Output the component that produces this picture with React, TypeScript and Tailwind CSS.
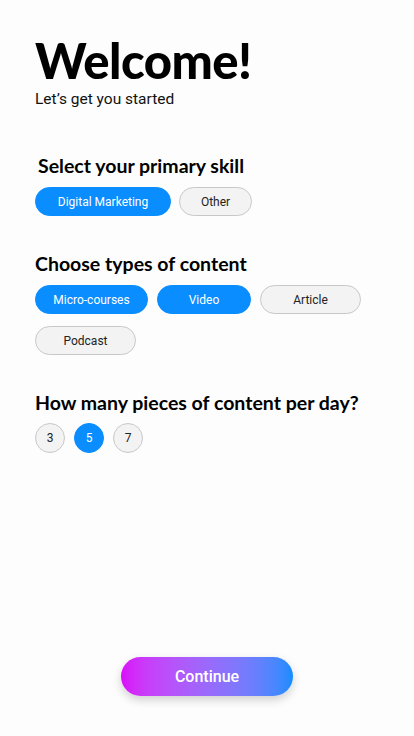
import { useState } from "react"

const heading = { fontFamily: "Lato, 'Noto Sans', sans-serif" }

function Pill({ label, active, onClick, w }: { label: string; active: boolean; onClick: () => void; w: string }) {
  return (
    <button
      type="button"
      onClick={onClick}
      className={`${w} h-[29px] rounded-full text-[12px] border ${
        active ? "bg-[#0a8dff] border-[#0a8dff] text-white" : "bg-[#f3f3f3] border-[#c8c8c8] text-[#222]"
      }`}
    >
      {label}
    </button>
  )
}

export default function App() {
  const [skill, setSkill] = useState("Digital Marketing")
  const [types, setTypes] = useState<string[]>(["Micro-courses", "Video"])
  const [count, setCount] = useState(5)

  const toggle = (t: string) =>
    setTypes((prev) => (prev.includes(t) ? prev.filter((x) => x !== t) : [...prev, t]))

  return (
    <div
      className="min-h-[736px] w-[414px] bg-[#fdfdfd] flex flex-col px-[35px] pt-[34px] pb-[40px] text-black"
      style={{ fontFamily: "Roboto, 'Liberation Sans', sans-serif" }}
    >
      <h1 className="text-[49px] leading-[52px] font-black tracking-[-0.5px]" style={heading}>
        Welcome!
      </h1>
      <p className="mt-[3px] text-[15.5px] leading-[20px] text-[#111]">Let’s get you started</p>

      <h2 className="mt-[45px] ml-[3px] text-[19.5px] leading-[24px] font-bold" style={heading}>
        Select your primary skill
      </h2>
      <div className="mt-[9px] flex gap-[8px]">
        {[
          ["Digital Marketing", "w-[136px]"],
          ["Other", "w-[73px]"],
        ].map(([s, w]) => (
          <Pill key={s} label={s} w={w} active={skill === s} onClick={() => setSkill(s)} />
        ))}
      </div>

      <h2 className="mt-[36px] text-[19.5px] leading-[24px] font-bold" style={heading}>
        Choose types of content
      </h2>
      <div className="mt-[9px] flex flex-wrap gap-x-[9px] gap-y-[12px] w-[340px]">
        {[
          ["Micro-courses", "w-[113px]"],
          ["Video", "w-[94px]"],
          ["Article", "w-[101px]"],
          ["Podcast", "w-[101px]"],
        ].map(([t, w]) => (
          <Pill key={t} label={t} w={w} active={types.includes(t)} onClick={() => toggle(t)} />
        ))}
      </div>

      <h2 className="mt-[36px] text-[19.5px] leading-[24px] font-bold" style={heading}>
        How many pieces of content per day?
      </h2>
      <div className="mt-[8px] flex gap-[9px]">
        {[3, 5, 7].map((n) => (
          <button
            key={n}
            type="button"
            onClick={() => setCount(n)}
            className={`w-[30px] h-[30px] rounded-full text-[12px] border ${
              count === n ? "bg-[#0a8dff] border-[#0a8dff] text-white" : "bg-[#f3f3f3] border-[#c8c8c8] text-[#222]"
            }`}
          >
            {n}
          </button>
        ))}
      </div>

      <div className="mt-auto flex justify-center">
        <button
          type="button"
          className="w-[172px] h-[39px] rounded-full bg-gradient-to-r from-[#d908f8] to-[#0a8dff] text-white text-[16px] font-medium shadow-[0_4px_10px_rgba(0,0,0,0.18)]"
        >
          Continue
        </button>
      </div>
    </div>
  )
}
